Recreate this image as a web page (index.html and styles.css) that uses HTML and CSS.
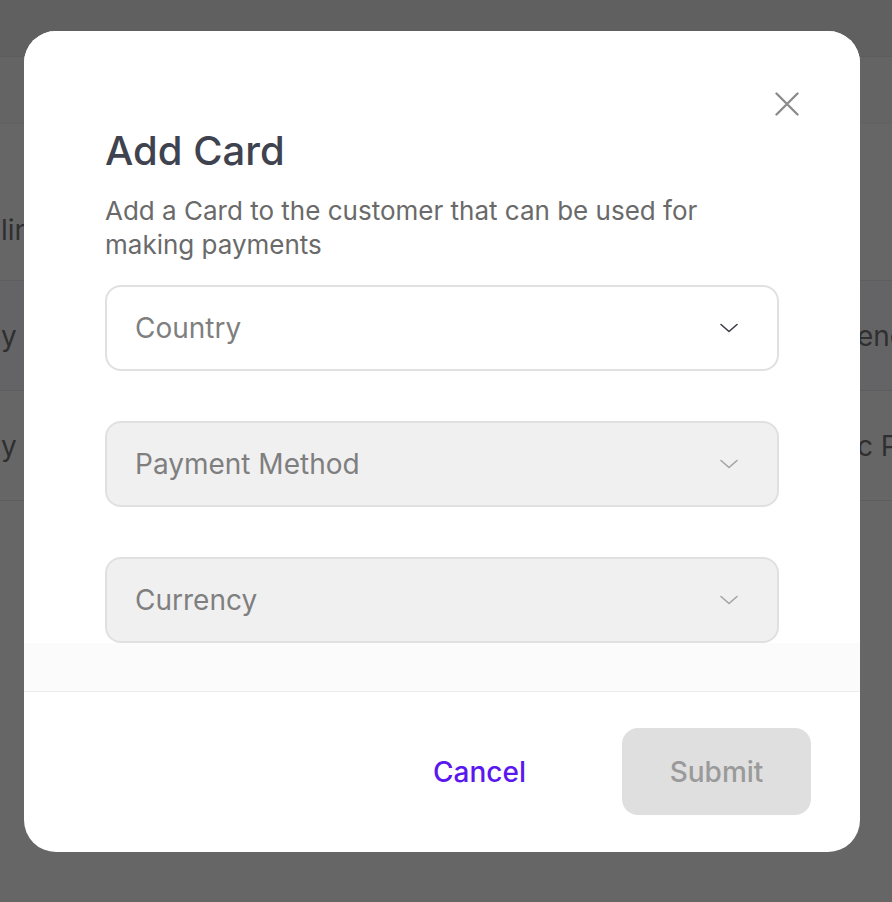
FILE: index.html
```html
<!DOCTYPE html>
<html lang="en">
<head>
<meta charset="utf-8">
<title>Add Card</title>
<link rel="stylesheet" href="styles.css">
</head>
<body>
<div class="page">
  <div class="topbar"></div>
  <div class="toolbar"></div>
  <div class="section"><span class="cell-left">lin</span></div>
  <div class="row"><span class="cell-left">y</span><span class="cell-right">enc</span></div>
  <div class="row"><span class="cell-left">y</span><span class="cell-right">c Pl</span></div>
  <div class="row-end"></div>
</div>

<div class="overlay">
  <div class="modal" role="dialog" aria-labelledby="dlg-title">
    <button class="close" aria-label="Close">
      <svg width="24" height="24" viewBox="0 0 24 24"><path d="M1.5 1.5 L22.5 22.5 M22.5 1.5 L1.5 22.5" fill="none" stroke="#8c8c8c" stroke-width="2.4" stroke-linecap="round"/></svg>
    </button>
    <div class="modal-body">
      <h2 class="title" id="dlg-title">Add Card</h2>
      <p class="subtitle">Add a Card to the customer that can be used for making payments</p>
      <div class="fields">
        <div class="select">
          <span class="placeholder">Country</span>
          <svg class="chev" width="18" height="10" viewBox="0 0 18 10"><path d="M1 1.5 L9 8.5 L17 1.5" fill="none" stroke="#3a3d45" stroke-width="1.6" stroke-linecap="round" stroke-linejoin="round"/></svg>
        </div>
        <div class="select disabled">
          <span class="placeholder">Payment Method</span>
          <svg class="chev" width="18" height="10" viewBox="0 0 18 10"><path d="M1 1.5 L9 8.5 L17 1.5" fill="none" stroke="#a3a3a3" stroke-width="1.6" stroke-linecap="round" stroke-linejoin="round"/></svg>
        </div>
        <div class="select disabled">
          <span class="placeholder">Currency</span>
          <svg class="chev" width="18" height="10" viewBox="0 0 18 10"><path d="M1 1.5 L9 8.5 L17 1.5" fill="none" stroke="#a3a3a3" stroke-width="1.6" stroke-linecap="round" stroke-linejoin="round"/></svg>
        </div>
      </div>
    </div>
    <div class="modal-footer">
      <button class="btn btn-cancel">Cancel</button>
      <button class="btn btn-submit" disabled>Submit</button>
    </div>
  </div>
</div>
</body>
</html>
```

FILE: styles.css
```css
* { box-sizing: border-box; }

html, body {
  margin: 0;
  padding: 0;
  height: 100%;
}

body {
  font-family: Inter, "Noto Sans", "Liberation Sans", sans-serif;
  background: #666666;
  overflow: hidden;
  position: relative;
}

/* background page (already dimmed) */
.page {
  display: flex;
  flex-direction: column;
  color: #2f2f30;
  font-size: 28px;
}
.topbar {
  height: 57px;
  background: #606060;
  border-bottom: 1px solid #5c5c5c;
}
.toolbar {
  height: 66px;
  background: #646464;
}
.section {
  height: 157px;
  display: flex;
  align-items: flex-end;
  padding-bottom: 33px;
  border-top: 1px solid #626262;
}
.row {
  height: 110px;
  display: flex;
  align-items: center;
  justify-content: space-between;
  border-top: 1px solid #5d5d5d;
}
.row:nth-of-type(4) { background: #646466; }
.row-end {
  border-top: 1px solid #5d5d5d;
}
.cell-left {
  padding-left: 1px;
}
.cell-right {
  width: 35px;
  white-space: nowrap;
  overflow: hidden;
}

/* overlay + modal */
.overlay {
  position: absolute;
  inset: 0;
  display: flex;
  align-items: flex-start;
  padding: 31px 32px 0 24px;
}
.modal {
  position: relative;
  width: 836px;
  background: #ffffff;
  border-radius: 32px;
  overflow: hidden;
  display: flex;
  flex-direction: column;
}
.close {
  position: absolute;
  top: 55px;
  right: 55px;
  width: 36px;
  height: 36px;
  padding: 6px;
  border: none;
  background: transparent;
  display: flex;
}
.modal-body {
  padding: 96px 81px 48px;
  background: linear-gradient(to bottom, #ffffff calc(100% - 48px), #fbfbfb calc(100% - 48px));
  border-bottom: 1px solid #ececec;
}
.title {
  margin: 0;
  font-size: 40px;
  line-height: 48px;
  font-weight: 500;
  color: #3f4350;
}
.subtitle {
  margin: 19px 0 0;
  font-size: 26px;
  line-height: 34px;
  color: #6a6a6a;
}
.fields {
  margin-top: 23px;
  display: flex;
  flex-direction: column;
  gap: 50px;
}
.select {
  height: 86px;
  border: 2px solid #e0e0e0;
  border-radius: 16px;
  background: #ffffff;
  display: flex;
  align-items: center;
  justify-content: space-between;
  padding: 0 39px 0 28px;
}
.select.disabled {
  background: #f0f0f0;
}
.placeholder {
  font-size: 28px;
  color: #7f7f7f;
}
.chev { display: block; }

.modal-footer {
  display: flex;
  justify-content: flex-end;
  gap: 48px;
  padding: 36px 49px 37px;
}
.btn {
  width: 189px;
  height: 87px;
  border: none;
  border-radius: 16px;
  font-family: Inter, "Noto Sans", "Liberation Sans", sans-serif;
  font-size: 28px;
  font-weight: 500;
}
.btn-cancel {
  background: transparent;
  color: #5a17ee;
}
.btn-submit {
  background: #dfdfdf;
  color: #9a9a9a;
}
```
